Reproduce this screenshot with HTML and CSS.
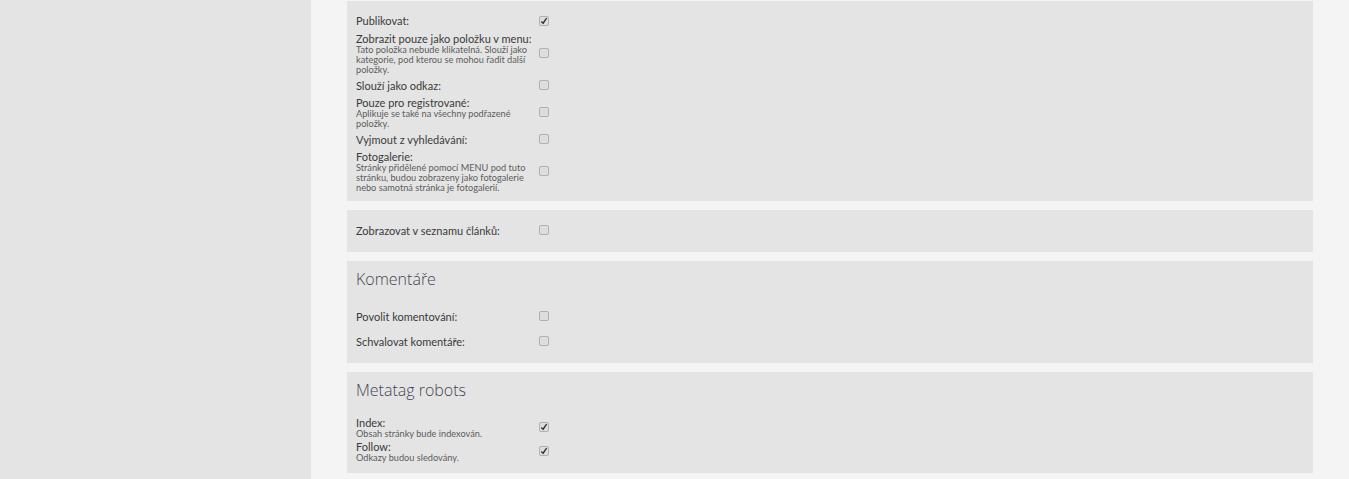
FILE: index.html
```html
<!DOCTYPE html>
<html lang="cs">
  <head>
    <meta charset="UTF-8" />
    <title>Nastavení stránky</title>
    <link rel="stylesheet" href="styles.css">
  </head>
  <body>
    <div class="sidebar"></div>
    <div class="content">
      <section class="panel panel--flags">
        <div class="row row--first">
          <div class="row__label"><label>Publikovat:</label></div>
          <span class="check check--on"><svg viewBox="0 0 10 10"><path d="M1.5 5 3.8 6.4 7.6 0.8 9 1.6 4.2 9.2 1.5 6.8Z" /></svg></span>
        </div>
        <div class="row">
          <div class="row__label">
            <label>Zobrazit pouze jako položku v menu:</label>
            <small>Tato položka nebude klikatelná. Slouží jako kategorie, pod kterou se mohou řadit další položky.</small>
          </div>
          <span class="check"></span>
        </div>
        <div class="row">
          <div class="row__label"><label>Slouží jako odkaz:</label></div>
          <span class="check"></span>
        </div>
        <div class="row">
          <div class="row__label">
            <label>Pouze pro registrované:</label>
            <small>Aplikuje se také na všechny podřazené položky.</small>
          </div>
          <span class="check"></span>
        </div>
        <div class="row">
          <div class="row__label"><label>Vyjmout z vyhledávání:</label></div>
          <span class="check"></span>
        </div>
        <div class="row">
          <div class="row__label">
            <label>Fotogalerie:</label>
            <small>Stránky přidělené pomocí MENU pod tuto stránku, budou zobrazeny jako fotogalerie nebo samotná stránka je fotogalerií.</small>
          </div>
          <span class="check"></span>
        </div>
      </section>

      <section class="panel panel--list">
        <div class="row">
          <div class="row__label"><label>Zobrazovat v seznamu článků:</label></div>
          <span class="check"></span>
        </div>
      </section>

      <section class="panel panel--comments">
        <h2 class="panel__title">Komentáře</h2>
        <div class="row">
          <div class="row__label"><label>Povolit komentování:</label></div>
          <span class="check"></span>
        </div>
        <div class="row">
          <div class="row__label"><label>Schvalovat komentáře:</label></div>
          <span class="check"></span>
        </div>
      </section>

      <section class="panel panel--robots">
        <h2 class="panel__title">Metatag robots</h2>
        <div class="row">
          <div class="row__label">
            <label>Index:</label>
            <small>Obsah stránky bude indexován.</small>
          </div>
          <span class="check check--on"><svg viewBox="0 0 10 10"><path d="M1.5 5 3.8 6.4 7.6 0.8 9 1.6 4.2 9.2 1.5 6.8Z" /></svg></span>
        </div>
        <div class="row">
          <div class="row__label">
            <label>Follow:</label>
            <small>Odkazy budou sledovány.</small>
          </div>
          <span class="check check--on"><svg viewBox="0 0 10 10"><path d="M1.5 5 3.8 6.4 7.6 0.8 9 1.6 4.2 9.2 1.5 6.8Z" /></svg></span>
        </div>
      </section>
    </div>
  </body>
</html>
```
FILE: styles.css
```css
* {
  margin: 0;
  padding: 0;
  box-sizing: border-box;
}
html,
body {
  height: 100%;
  overflow: hidden;
}
body {
  display: flex;
  background-color: #f4f4f4;
  color: #3a3a3a;
  font-family: Lato, "Open Sans", sans-serif;
  font-size: 11px;
}

.sidebar {
  width: 311px;
  flex-shrink: 0;
  background-color: #e4e4e4;
}
.content {
  width: 966px;
  margin-left: 36px;
  padding-top: 1px;
  display: flex;
  flex-direction: column;
  gap: 9px;
}

/* Panels */
.panel {
  background-color: #e4e4e4;
  padding: 0 9px;
}
.panel--flags {
  height: 200px;
  padding-top: 14px;
}
.panel--list {
  height: 42px;
  padding-top: 15px;
}
.panel--comments {
  height: 102px;
}
.panel--comments .panel__title {
  margin-bottom: 21px;
}
.panel--comments .row {
  margin-bottom: 13px;
}
.panel--robots {
  height: 101px;
}
.panel--robots .panel__title {
  margin-bottom: 16px;
}
.panel--robots .row {
  margin-bottom: 2px;
}
.panel__title {
  font-family: "Open Sans", sans-serif;
  font-size: 16px;
  font-weight: 300;
  line-height: 22px;
  padding-top: 7px;
  box-sizing: content-box;
  color: #445;
}

/* Rows */
.row {
  display: flex;
  align-items: center;
  margin-bottom: 5px;
}
.row--first {
  margin-bottom: 6px;
}
.row__label {
  width: 183px;
  line-height: 12px;
}
.row__label label {
  display: block;
  white-space: nowrap;
}
.row__label small {
  display: block;
  width: 176px;
  font-size: 9.2px;
  line-height: 10px;
  color: #5c5c5c;
}

/* Checkbox */
.check {
  display: block;
  width: 10px;
  height: 10px;
  margin-bottom: 2px;
  border: 1px solid #b0b0b0;
  border-radius: 2px;
  background-color: #dedede;
}
.row--first .check {
  margin-bottom: 0;
}
.check svg {
  display: block;
  width: 8px;
  height: 8px;
  fill: #2e2e2e;
}
```
